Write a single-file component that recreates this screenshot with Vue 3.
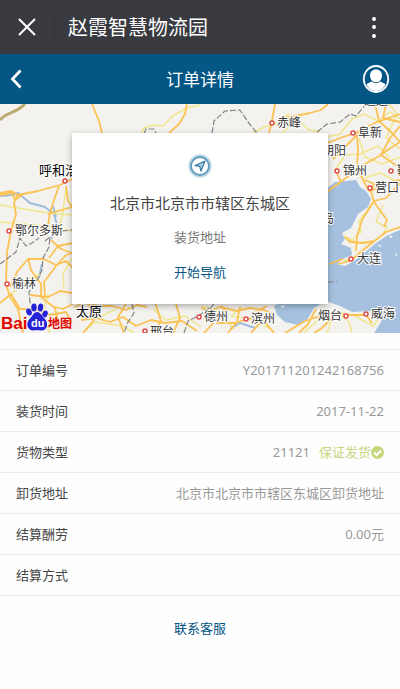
<script setup>
const rows = [
  { label: '订单编号', value: 'Y201711201242168756' },
  { label: '装货时间', value: '2017-11-22' },
  { label: '货物类型', value: '21121', tag: '保证发货' },
  { label: '卸货地址', value: '北京市北京市市辖区东城区卸货地址' },
  { label: '结算酬劳', value: '0.00元' },
  { label: '结算方式', value: '' },
]

const cities = [
  { name: '呼和浩特', x: 39, y: 71, mx: 65, my: 77, big: true },
  { name: '鄂尔多斯', x: 15, y: 131, mx: 9, my: 127 },
  { name: '榆林', x: 12, y: 184, mx: 7, my: 180 },
  { name: '太原', x: 76, y: 212, big: true },
  { name: '邢台', x: 150, y: 232, mx: 145, my: 227 },
  { name: '德州', x: 204, y: 217, mx: 199, my: 213 },
  { name: '滨州', x: 251, y: 219, mx: 246, my: 215 },
  { name: '烟台', x: 318, y: 216, mx: 346, my: 212 },
  { name: '威海', x: 371, y: 214, mx: 366, my: 210 },
  { name: '大连', x: 357, y: 159, mx: 351, my: 155 },
  { name: '营口', x: 375, y: 88, mx: 370, my: 84 },
  { name: '鞍山', x: 397, y: 71, mx: 391, my: 67 },
  { name: '锦州', x: 343, y: 71, mx: 337, my: 67 },
  { name: '朝阳', x: 322, y: 51 },
  { name: '阜新', x: 358, y: 33, mx: 353, my: 29 },
  { name: '赤峰', x: 277, y: 23, mx: 272, my: 19 },
  { name: '秦皇岛', x: 298, y: 119 },
  { name: '通辽', x: 364, y: 1 },
]
</script>

<template>
  <div class="page">
    <header class="appbar">
      <button class="icon-btn close" aria-label="关闭">
        <svg width="18" height="18" viewBox="0 0 18 18"><path d="M1 1L17 17M17 1L1 17" stroke="#fff" stroke-width="2" fill="none" /></svg>
      </button>
      <h1 class="app-title">赵霞智慧物流园</h1>
      <button class="icon-btn more" aria-label="更多">
        <svg width="6" height="22" viewBox="0 0 6 22" fill="#fff"><circle cx="3" cy="3" r="2" /><circle cx="3" cy="11" r="2" /><circle cx="3" cy="20" r="2" /></svg>
      </button>
    </header>

    <nav class="navbar">
      <button class="icon-btn" aria-label="返回">
        <svg width="12" height="20" viewBox="0 0 12 20"><path d="M10.500 1.500L2.500 10L10.500 18.500" stroke="#fff" stroke-width="2.800" fill="none" /></svg>
      </button>
      <h2 class="nav-title">订单详情</h2>
      <button class="icon-btn" aria-label="个人中心">
        <svg width="28" height="30" viewBox="0 0 28 30">
          <ellipse cx="14" cy="15" rx="12.200" ry="13" fill="none" stroke="#fff" stroke-width="1.800" />
          <path d="M14 5.500C17.800 5.500 20 8 20 11.500C20 15 17.800 18.300 14 18.300C10.200 18.300 8 15 8 11.500C8 8 10.200 5.500 14 5.500Z" fill="#fff" />
          <path d="M4.500 20.500C5.500 18.800 8.500 18.300 10 17.500C12 19.600 16 19.600 18 17.500C19.500 18.300 22.500 18.800 23.500 20.500C21.500 24.500 18.300 27 14 27C9.700 27 6.500 24.500 4.500 20.500Z" fill="#fff" />
        </svg>
      </button>
    </nav>

    <section class="map-area">
      <svg class="map" viewBox="0 0 400 229" preserveAspectRatio="xMidYMid slice" aria-hidden="true">
        <rect width="400" height="229" fill="#f4f2ee" />
        <path class="water" d="M300 90L329 83L335 78L347 77L356 76L360 83L366 87L371 95L368 103L358 110L351 124L342 129L345 135L341 140L351 144L352 151L343 155L337 160L345 162L354 157L363 150L376 139L388 131L400 126V229H374L381 218L384 210L372 207L352 208L340 202L326 197L314 204L307 216L298 221L285 218L277 211L274 202L283 197L292 190Z" />
        <g fill="#f4f2ee"><path d="M377 140l5 2l-2 1zM389 130l4 3l-3 1zM280 202l5-1l-2 3zM395 149l3 2l-2 1z" /></g>
        <g class="river">
          <path d="M0 92L12 91L18 89L30 99L45 103L54 110L57 121L51 135M53 102L56 113M42 160L39 174M230 225L240 219L255 224" />
        </g>
        <g class="minor">
          <path d="M0 101L30 106L48 109L72 111M0 118L35 121L72 127M66 84L63 108L58 128M72 154L63 170L64 185M11 190L28 176L41 170M48 190L42 210L50 229M141 29L144 24L153 21L163 22L174 11L187 4L200 1" />
          <path d="M253 29L264 23L275 20L289 10L298 16L309 26L320 28M287 10L290 22L282 29M322 34L340 30L352 15L364 10L378 17L390 8L400 15M335 66L345 51L360 50L378 42L390 54M359 35L365 53L382 60L400 53M364 74L380 69L394 76M389 0L397 10L386 34L400 45" />
          <path d="M372 100L359 117L361 128L350 137M383 101L376 118L387 123L383 130M344 132L358 139L372 137M343 157L355 154L362 146M75 194L88 201L102 212L116 205M83 229L95 218L123 222L134 229M153 205L166 216L185 212L201 223M202 202L219 208L234 225M242 203L231 212L256 216L270 225M304 229L320 214L336 207L349 218L352 229M355 212L373 222L378 216M327 229L332 215" />
        </g>
        <g class="road">
          <path d="M92 0L99 17L102 29M187 0L185 10L179 20L169 29M0 89L11 87L18 91L38 87L60 81L72 75M17 91L14 99L16 110L11 127L7 148L6 180L10 193L18 205L23 229M59 82L54 96L50 109L48 122M66 82L68 97L76 108M48 110L72 103M0 91L12 89L15 96L22 91M51 136L61 145L72 149M73 139L58 142L49 154M10 183L17 168L28 155L44 155L56 161L66 157L73 164M30 191L48 193L60 187L72 189M45 193L44 178L56 162L66 151L73 149M28 154L31 166L41 180L41 193L55 204L58 219M55 203L63 205L73 200" />
          <path d="M0 199L11 190L20 205L35 205L50 211L66 208L72 219M74 203L88 198L97 202L112 202L126 206L137 201L147 203M81 216L96 214L110 218L123 213L136 222L151 216L165 219L182 217L197 227M88 197L94 216L83 229M126 200L118 213L124 229M155 198L161 217L153 229M176 200L180 214L173 229" />
          <path d="M201 204L210 207L220 203L237 207L250 204L264 206L274 211M204 229L215 217L225 208L222 202M240 203L237 218L228 229M251 229L260 219L256 208L267 202M274 229L264 217L251 214L235 219L216 219M285 229L305 217L320 212L338 208L347 211L366 211L372 219M299 229L308 220L316 205M314 229L322 224L333 213" />
          <path d="M275 0L272 17L269 29M285 14L310 9L321 6L328 0M325 40L340 34L355 29L377 18L400 10M375 0L379 17L391 28L400 38M357 30L358 46L357 63L364 78L370 88M400 22L390 34L381 51L365 60L347 73L327 88M381 51L400 64M400 76L386 79L371 87L374 98L387 116L384 123M374 97L362 116L357 132L356 147M400 79L386 94L374 97M336 67L341 78M359 29L345 43L333 55M338 160L350 157L368 142L386 128L400 123M345 133L350 138L363 139L375 137M386 0L383 14L400 18M400 38L389 45L379 52M365 76L374 80L371 87M329 160L343 155" />
        </g>
        <path d="M0 16C7 7 14 11 25 0" fill="none" stroke="#b9aa72" stroke-width="3" />
        <g class="boundary">
          <path d="M0 160L16 148L20 134L26 142L32 139L39 134M45 137L50 133L49 143L43 154L42 166L35 180L29 188L30 198L34 207M62 127L72 126M144 30L146 25L154 25L157 31M212 29L214 17L225 7L240 6L248 18L257 29M317 28L327 20L340 18L350 10L356 12L366 0M328 178H337M132 200L134 209L128 218L124 229M184 229L188 217L200 211L209 204M210 205L216 197" />
        </g>
        <g v-for="c in cities" :key="c.name">
          <circle v-if="c.mx" :cx="c.mx" :cy="c.my" r="2" fill="#fff" stroke="#df4b4b" stroke-width="1.500" />
          <text :x="c.x" :y="c.y" :class="['city', { big: c.big }]">{{ c.name }}</text>
        </g>
        <g class="baidu">
          <text x="1" y="225" class="baidu-latin">Bai</text>
          <g fill="#2722d8" stroke="#fff" stroke-width="1" paint-order="stroke">
            <ellipse cx="29" cy="208" rx="2.800" ry="3.600" transform="rotate(-18 29 208)" />
            <ellipse cx="34" cy="203.500" rx="2.700" ry="4" />
            <ellipse cx="40.500" cy="203.500" rx="2.700" ry="4" transform="rotate(8 40.500 203.500)" />
            <ellipse cx="45" cy="210" rx="2.700" ry="3.600" transform="rotate(18 45 210)" />
            <path d="M37 208C40.500 208 42 212 44.500 214.500C49 219 47.500 226.500 41.500 226.500C38.500 226.500 36 226 33.500 226.500C27 226.500 25.500 219.500 29.500 215C32.500 212.500 33.500 208 37 208Z" />
          </g>
          <text x="31" y="223" class="baidu-du">du</text>
          <text x="48" y="224" class="baidu-cn">地图</text>
        </g>
      </svg>

      <div class="card">
        <svg class="compass" width="24" height="24" viewBox="0 0 24 24">
          <circle cx="12" cy="12" r="10" fill="none" stroke="#c3d9e5" stroke-width="3.500" />
          <circle cx="12" cy="12" r="9" fill="none" stroke="#5e9bbd" stroke-width="1.800" />
          <path d="M17 7L7 11.500L11.800 12.300L13 17Z" fill="#a9cbdc" stroke="#3f82a8" stroke-width="1.300" stroke-linejoin="round" />
        </svg>
        <p class="address">北京市北京市市辖区东城区</p>
        <p class="caption">装货地址</p>
        <a class="link" href="#navigate">开始导航</a>
      </div>
    </section>

    <dl class="details">
      <div v-for="row in rows" :key="row.label" class="row">
        <dt>{{ row.label }}</dt>
        <dd>
          <span>{{ row.value }}</span>
          <span v-if="row.tag" class="tag">{{ row.tag }}<svg width="13" height="13" viewBox="0 0 13 13"><circle cx="6.500" cy="6.500" r="6.500" fill="#c5d67c" /><path d="M3 6.500L5.700 9L10 4.500" fill="none" stroke="#fff" stroke-width="2" /></svg></span>
        </dd>
      </div>
    </dl>

    <footer class="support"><a class="link" href="#support">联系客服</a></footer>
  </div>
</template>

<style>
body {
  background: #fefefe;
}
</style>

<style scoped>
.page {
  font-family: "Noto Sans", "Noto Sans CJK SC", sans-serif;
  font-size: 13px;
  line-height: 20px;
  color: #444;
}
h1, h2, p, dl, dd {
  margin: 0;
  font-weight: 400;
}
.icon-btn {
  display: flex;
  align-items: center;
  justify-content: center;
  padding: 0;
  border: 0;
  background: none;
}
.appbar {
  display: flex;
  align-items: center;
  height: 54px;
  background: #393a40;
  color: #fff;
}
.close {
  width: 55px;
  height: 26px;
  border-right: 1px solid #303136;
}
.app-title {
  flex: 1;
  padding: 2px 0 0 13px;
  font-size: 20px;
  line-height: 28px;
}
.more {
  width: 52px;
  height: 54px;
}
.navbar {
  display: flex;
  align-items: center;
  justify-content: space-between;
  height: 50px;
  padding: 0 10px;
  background: #045685;
  color: #fff;
}
.navbar .icon-btn {
  width: 28px;
  height: 40px;
}
.navbar .icon-btn:first-child {
  justify-content: flex-start;
}
.nav-title {
  padding-top: 2px;
  font-size: 17px;
  line-height: 24px;
}
.map-area {
  position: relative;
  display: flex;
  justify-content: center;
  padding: 29px 18%;
  overflow: hidden;
}
.map {
  position: absolute;
  inset: 0;
  width: 100%;
  height: 100%;
}
.water {
  fill: #a5c1df;
}
.river, .minor, .road, .boundary {
  fill: none;
  stroke-linejoin: round;
}
.river {
  stroke: #9dbbdc;
  stroke-width: 2;
}
.minor {
  stroke: #f0e68e;
  stroke-width: 1.5;
}
.road {
  stroke: #fbc254;
  stroke-width: 1.8;
}
.boundary {
  stroke: #858585;
  stroke-width: 1.2;
  stroke-dasharray: 6 2;
}
.city {
  font-size: 12px;
  fill: #333;
  stroke: #fff;
  stroke-width: 2px;
  paint-order: stroke;
}
.big {
  font-size: 13px;
  fill: #000;
}
.baidu {
  font-weight: 700;
}
.baidu-latin {
  font-family: "Liberation Sans", sans-serif;
  font-size: 17px;
  fill: #e10601;
}
.baidu-du {
  font-family: "Liberation Sans", sans-serif;
  font-size: 11px;
  fill: #fff;
}
.baidu-cn {
  font-size: 12px;
  fill: #e10601;
}
.card {
  position: relative;
  flex: 1;
  display: flex;
  flex-direction: column;
  align-items: center;
  padding: 21px 16px 22px;
  background: #fff;
  box-shadow: 0 2px 6px rgba(0, 0, 0, 0.3);
}
.address {
  margin-top: 15px;
  font-size: 15px;
  line-height: 20px;
}
.caption {
  margin: 14px 0 15px;
  color: #777;
}
.link {
  color: #045685;
  text-decoration: none;
}
.details {
  margin-top: 16px;
  border-top: 1px solid #ececec;
}
.row {
  display: flex;
  align-items: center;
  justify-content: space-between;
  height: 40px;
  padding: 0 16px;
  border-bottom: 1px solid #ececec;
}
dd {
  display: flex;
  gap: 9px;
  color: #999;
}
.tag {
  display: flex;
  align-items: center;
  color: #c5d67c;
}
.support {
  padding: 22px 0;
  text-align: center;
}
</style>
